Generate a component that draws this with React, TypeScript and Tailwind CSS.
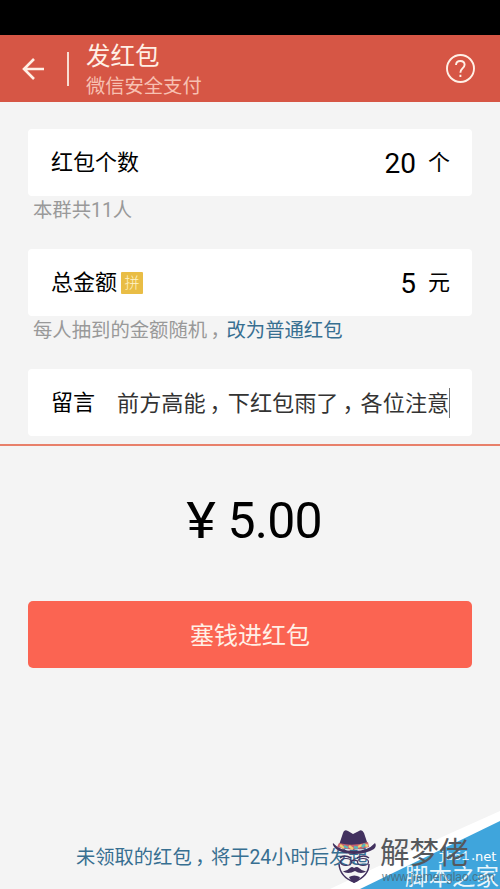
import type { ReactNode } from 'react';

const Comma = () => <span className="relative left-[0.18em]">，</span>;

function Card({ children }: { children: ReactNode }) {
  return (
    <div className="flex h-[67px] items-center rounded-[4px] bg-white pr-[22px] pl-[23px] text-[22px] leading-[30px] text-black">
      {children}
    </div>
  );
}

function Hint({ children }: { children: ReactNode }) {
  return <p className="h-[53px] pt-[1px] pl-[5px] text-[19.35px] leading-[28px] whitespace-nowrap text-[#999]">{children}</p>;
}

function Hat() {
  return (
    <svg className="absolute left-[331px] top-[828px] h-[57px] w-[46px]" viewBox="0 0 46 57" fill="none">
      <path d="M8 17 12 5Q13 1 17 3L22 6 28 3Q31 1 33 5L37 17Z" fill="#42315f" />
      <path d="M2 15Q1 17 5 21Q12 26 23 26Q35 26 43 21Q46 18 44 15Q37 23 23 23Q9 23 2 15Z" fill="#42315f" />
      <path d="M8 15Q22 19 37 14L38 19Q22 24 6 19Z" fill="#c76270" />
      <path d="M9 17 13 20M18 18 22 21M27 19 31 17M34 17 37 18" stroke="#efd071" strokeWidth="2.5" />
      <path d="M13 18 17 20M23 19 27 20M31 19 34 16" stroke="#57b6bd" strokeWidth="2.5" />
      <path d="M9 30Q13 26 20 30M26 30Q33 26 38 30M21 33Q23 31 26 33" stroke="#42315f" strokeWidth="1.5" />
      <ellipse cx="15" cy="34" rx="5.5" ry="3.5" stroke="#42315f" strokeWidth="1.2" />
      <ellipse cx="32" cy="34" rx="5.5" ry="3.5" stroke="#42315f" strokeWidth="1.2" />
      <path d="M8 36Q9 49 23 54Q38 48 38 36" stroke="#42315f" strokeWidth="1.5" />
      <path d="M11 43Q15 44 19 40Q21 38 23 40Q26 38 28 40Q32 44 36 43Q30 47 24 43Q17 47 11 43Z" fill="#42315f" />
      <path d="M18 49Q23 46 29 49L27 53 23 55 20 53Z" fill="#42315f" />
    </svg>
  );
}

export default function App() {
  return (
    <div className="relative flex h-[889px] w-[500px] flex-col overflow-hidden bg-[#f4f4f4] font-['Roboto','Noto_Sans_CJK_SC',sans-serif]">
      <div className="h-[35px] shrink-0 bg-black" />
      <header className="flex h-[67px] shrink-0 items-center bg-[#d65645] pr-[25px] pl-[22px] text-[#fff0e6]">
        <svg className="h-[24px] w-[23px]" viewBox="0 0 23 24" fill="none" stroke="currentColor" strokeWidth="2.6">
          <path d="M22 12H2M12 2 2 12 12 22" />
        </svg>
        <div className="ml-[22px] h-[34px] w-[2px] bg-[#f8ddd2]" />
        <div className="ml-[17px] flex flex-1 flex-col pt-[4px]">
          <h1 className="text-[24.5px] leading-[32px]">发红包</h1>
          <p className="text-[19.3px] leading-[28px] text-[#f7c0b2]">微信安全支付</p>
        </div>
        <svg className="h-[30px] w-[30px]" viewBox="0 0 30 30" fill="none" stroke="currentColor" strokeWidth="1.9">
          <circle cx="15.5" cy="14.5" r="13.5" />
          <path d="M11 11Q11.2 7 15.3 7Q19.6 7 19.6 10.8Q19.6 12.8 17.2 14.7Q15.4 16.2 15.4 18.8M15.4 20.8V23" />
        </svg>
      </header>

      <main className="flex h-[342px] shrink-0 flex-col px-[28px] pt-[27px]">
        <Card>
          <span className="flex-1">红包个数</span>
          <span className="mr-[12px] pt-[2px] text-[28px]">20</span>
          <span>个</span>
        </Card>
        <Hint>本群共11人</Hint>
        <Card>
          <span>总金额</span>
          <span className="ml-[4px] flex h-[22px] w-[22px] items-center justify-center rounded-[1px] bg-[#e9bd45] text-[15px] font-light text-[#fff3c9]">拼</span>
          <span className="mr-[12px] ml-auto pt-[2px] text-[28px]">5</span>
          <span>元</span>
        </Card>
        <Hint>
          每人抽到的金额随机<Comma /><a className="text-[#376f91]">改为普通红包</a>
        </Hint>
        <Card>
          <span className="w-[66px] shrink-0">留言</span>
          <span className="w-[333px] border-r border-[#777] text-[22.15px] whitespace-nowrap text-[#333]">
            前方高能<Comma />下红包雨了<Comma />各位注意
          </span>
        </Card>
      </main>
      <div className="h-[2px] shrink-0 bg-[#e8806a]" />

      <section className="flex flex-col px-[28px] pt-[45px]">
        <div className="flex h-[60px] items-center justify-center gap-[13px] pl-[10px] text-[50px] leading-[60px] text-black">
          <span className="scale-x-[1.13]">¥</span>
          <span className="tracking-[-0.8px]">5.00</span>
        </div>
        <button className="mt-[50px] h-[67px] rounded-[5px] bg-[#fb6452] pt-[2px] text-[24px] text-[#fff0e6]">塞钱进红包</button>
      </section>

      <svg className="absolute right-0 bottom-0 h-[80px] w-[170px]" viewBox="0 0 170 80">
        <path d="M0 80Q80 42 170 2V80Z" fill="#fff" />
        <path d="M30 80 170 12V80Z" fill="#3fa5dc" />
      </svg>
      <footer className="mt-auto mb-[17px] pl-[76px] text-[19.3px] leading-[28px] whitespace-nowrap text-[#376f91]">
        <span className="relative">未领取的红包<Comma />将于24小时后发起</span>
      </footer>

      <span className="absolute top-[849px] left-[438px] font-['Liberation_Mono',monospace] text-[13px] leading-[16px] whitespace-pre text-[#e5f6ff]">jb51.</span>
      <span className="absolute top-[849px] left-[475px] font-['DejaVu_Sans',sans-serif] text-[13px] leading-[16px] text-white">net</span>
      <span className="absolute top-[862px] left-[405px] text-[23.5px] leading-[30px] whitespace-nowrap text-[#e8f6fc]">脚本之家</span>
      <span className="absolute top-[869px] left-[382px] font-['Liberation_Sans',sans-serif] text-[12px] leading-[16px] whitespace-nowrap text-[#4b6672]/80">www.jiemenglao.com</span>
      <Hat />
      <span className="absolute top-[833px] left-[380px] text-[29.5px] leading-[40px] whitespace-nowrap text-[#55585c]">解梦佬</span>
    </div>
  );
}
